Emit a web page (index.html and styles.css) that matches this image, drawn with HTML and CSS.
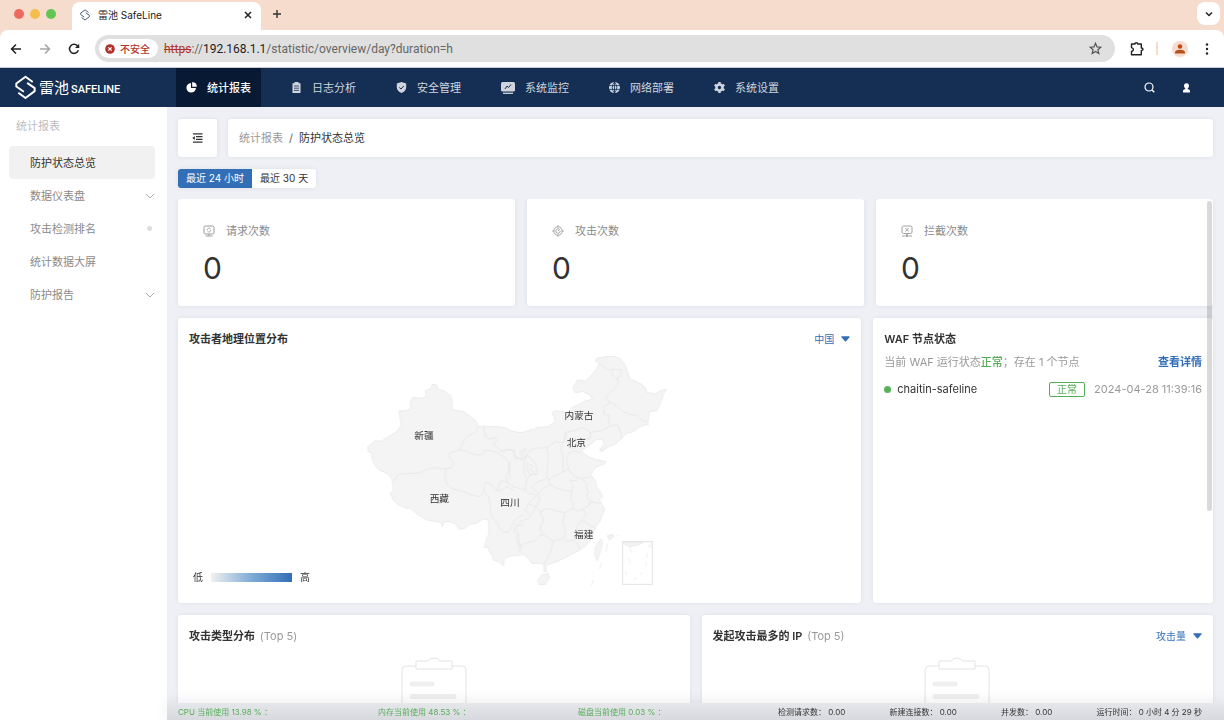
FILE: index.html
```html
<!DOCTYPE html>
<html lang="zh-CN">
<head>
<meta charset="utf-8">
<meta name="viewport" content="width=device-width, initial-scale=1">
<title>雷池 SafeLine</title>
<link rel="stylesheet" href="styles.css">
</head>
<body>
<svg class="defs" width="0" height="0" aria-hidden="true">
  <symbol id="logo" viewBox="44 224 64 74">
    <path d="M98 244 76 228 48 249V258L71 274M54 277 76 293 104 272V263L81 247" fill="none" stroke="currentColor" stroke-width="6" stroke-linejoin="round"/>
  </symbol>
  <symbol id="chevron" viewBox="0 0 10 10"><path d="M1 3 5 7 9 3" fill="none" stroke="currentColor" stroke-width="1"/></symbol>
  <symbol id="caret" viewBox="0 0 10 6"><path d="M1 0H9Q10 0 9.400 1L5.700 5.500Q5 6 4.300 5.500L.6 1Q0 0 1 0Z" fill="currentColor"/></symbol>
  <symbol id="clipboard" viewBox="0 0 66 60">
    <path d="M15 9H5Q1 9 1 13V60H65V13Q65 9 61 9H51" fill="#fff" stroke="#e4e4e4"/>
    <path d="M15 4H27Q29 1 33 1T39 4H51V12H15Z" fill="#fff" stroke="#e4e4e4"/>
    <path d="M11 27H31M11 39.500H53" stroke="#efefef" stroke-width="5" stroke-linecap="round"/>
  </symbol>
</svg>

<div class="browser">
  <div class="tabstrip">
    <div class="lights"><i class="red"></i><i class="amber"></i><i class="green"></i></div>
    <div class="tab">
      <svg class="tab-logo" width="10" height="12"><use href="#logo"/></svg>
      <span class="tab-title">雷池 SafeLine</span>
      <button class="plain" aria-label="关闭标签页"><svg width="8" height="8" viewBox="0 0 8 8"><path d="M1 1 7 7M7 1 1 7" stroke="#222" stroke-width="1.500"/></svg></button>
    </div>
    <button class="plain new-tab" aria-label="新标签页"><svg width="10" height="10" viewBox="0 0 10 10"><path d="M5 1V9M1 5H9" stroke="#333" stroke-width="1.400"/></svg></button>
    <button class="plain tab-search" aria-label="搜索标签页"><svg width="8" height="8" viewBox="0 0 8 8"><path d="M1 2.500 4 5.500 7 2.500" fill="none" stroke="#222" stroke-width="1.500"/></svg></button>
  </div>
  <div class="toolbar">
    <button class="plain" aria-label="后退"><svg width="12" height="12" viewBox="0 0 12 12"><path d="M6 1.500 1.500 6 6 10.500M1.500 6H11" fill="none" stroke="#222" stroke-width="1.500"/></svg></button>
    <button class="plain" aria-label="前进"><svg width="12" height="12" viewBox="0 0 12 12"><path d="M6 1.500 10.500 6 6 10.500M10.500 6H1" fill="none" stroke="#a5a5a5" stroke-width="1.500"/></svg></button>
    <button class="plain" aria-label="重新加载"><svg width="12" height="12" viewBox="0 0 12 12"><path d="M10.300 7.300A4.500 4.500 0 1 1 9.500 3L11 4.500" fill="none" stroke="#222" stroke-width="1.500"/><path d="M11.200.8V5H7Z" fill="#222"/></svg></button>
    <div class="omnibox">
      <button class="security">
        <svg width="10" height="10" viewBox="0 0 10 10"><circle cx="5" cy="5" r="4.800" fill="#b0322a"/><path d="M3.300 3.300 6.700 6.700M6.700 3.300 3.300 6.700" stroke="#fff" stroke-width="1.200"/></svg>不安全</button>
      <div class="url" role="textbox" aria-label="地址栏"><s>https</s>://<b>192.168.1.1</b>/statistic/overview/day?duration=h</div>
      <button class="plain" aria-label="收藏"><svg width="13" height="13" viewBox="0 0 13 13"><path d="M6.500 1.300 8 4.900 11.900 5.200 8.900 7.700 9.800 11.500 6.500 9.500 3.200 11.500 4.100 7.700 1.100 5.200 5 4.900Z" fill="none" stroke="#555" stroke-width="1.200"/></svg></button>
    </div>
    <button class="plain ext" aria-label="扩展程序"><svg width="14" height="14" viewBox="0 0 14 14"><path d="M1.500 2H5Q5 .8 6.300.8T7.600 2H11.300V6Q13 6 13 7.200T11.300 8.400V12.800H1.500V9.500Q3.400 9 3.400 7.500T1.500 5.600Z" fill="none" stroke="#222" stroke-width="1.400" stroke-linejoin="round"/></svg></button>
    <span class="divider"></span>
    <button class="plain avatar" aria-label="个人资料"><svg width="10" height="10" viewBox="0 0 10 10"><circle cx="5" cy="2.500" r="2.300" fill="#b8501e"/><path d="M0 9.500V8.200Q1 5.800 5 5.800T10 8.200V9.500Z" fill="#b8501e"/></svg></button>
    <button class="plain" aria-label="菜单"><svg width="4" height="12" viewBox="0 0 4 12"><g fill="#222"><circle cx="2" cy="1.500" r="1.200"/><circle cx="2" cy="6" r="1.200"/><circle cx="2" cy="10.500" r="1.200"/></g></svg></button>
  </div>
</div>

<header class="topbar">
  <a class="brand" href="#">
    <svg width="21" height="25"><use href="#logo"/></svg>
    <span class="brand-cn">雷池</span><span class="brand-en">SAFELINE</span>
  </a>
  <nav class="mainnav">
    <a class="active" href="#"><svg width="11" height="11" viewBox="0 0 11 11"><path d="M5 1V6H10A4.800 4.800 0 1 1 5 1Z" fill="currentColor"/><path d="M6.200 0A5 5 0 0 1 10.900 4.800H6.200Z" fill="currentColor"/></svg>统计报表</a>
    <a href="#"><svg width="11" height="11" viewBox="0 0 11 11"><path d="M1.500 1.300H3.500V0H7.500V1.300H9.500V11H1.500Z" fill="currentColor"/><path d="M3 4H8M3 6.200H8M3 8.400H8" stroke="#142e54" stroke-width=".8"/></svg>日志分析</a>
    <a href="#"><svg width="11" height="11" viewBox="0 0 11 11"><path d="M5.500 0 10.200 1.500V5Q10.200 9 5.500 11Q.8 9 .8 5V1.500Z" fill="currentColor"/><path d="M3.300 5.500 5 7 7.800 4" fill="none" stroke="#142e54"/></svg>安全管理</a>
    <a href="#"><svg width="14" height="12" viewBox="0 0 14 12"><rect width="14" height="9.500" rx="1.500" fill="currentColor"/><path d="M2 11.300H12" stroke="currentColor" stroke-width="1.300"/><path d="M4 7 6 4 7.500 5.500 10 2.500" fill="none" stroke="#142e54"/></svg>系统监控</a>
    <a href="#"><svg width="11" height="11" viewBox="0 0 11 11"><circle cx="5.500" cy="5.500" r="5.500" fill="currentColor"/><path d="M0 3.600H11M0 7.400H11M5.500 0V11M5.500 0Q1 5.500 5.500 11Q10 5.500 5.500 0" fill="none" stroke="#142e54" stroke-width=".8"/></svg>网络部署</a>
    <a href="#"><svg width="11" height="11" viewBox="0 0 11 11"><circle cx="5.500" cy="5.500" r="3" fill="none" stroke="currentColor" stroke-width="2.600"/><path d="M5.500 0V2.500M5.500 8.500V11M.7 2.700 3 4.200M8 6.800 10.300 8.300M.7 8.300 3 6.800M8 4.200 10.300 2.700" stroke="currentColor" stroke-width="2.400"/></svg>系统设置</a>
  </nav>
  <div class="tools">
    <button class="plain" aria-label="搜索"><svg width="11" height="11" viewBox="0 0 11 11"><circle cx="5" cy="5" r="4" fill="none" stroke="#fff" stroke-width="1.200"/><path d="M8 8 10.300 10.300" stroke="#fff" stroke-width="1.400"/></svg></button>
    <button class="plain" aria-label="用户"><svg width="9" height="10" viewBox="0 0 9 10"><circle cx="4.500" cy="2.800" r="2.500" fill="#fff"/><path d="M3.200 4H5.800V6L8 7.200V9.500H1V7.200L3.200 6Z" fill="#fff"/></svg></button>
  </div>
</header>

<div class="app">
  <aside class="sidebar">
    <h2>统计报表</h2>
    <nav>
      <a class="active" href="#">防护状态总览</a>
      <a href="#">数据仪表盘<svg width="10" height="10"><use href="#chevron"/></svg></a>
      <a href="#">攻击检测排名<i class="dot"></i></a>
      <a href="#">统计数据大屏</a>
      <a href="#">防护报告<svg width="10" height="10"><use href="#chevron"/></svg></a>
    </nav>
  </aside>

  <div class="page">
    <div class="crumbbar">
      <button class="fold" aria-label="收起菜单"><svg width="11" height="10" viewBox="0 0 11 10"><path d="M1 .8H10.500M4 3.600H10.500M4 6.400H10.500M1 9.200H10.500" stroke="#333" stroke-width="1.300"/><path d="M2.800 3V7L.3 5Z" fill="#333"/></svg></button>
      <nav class="crumbs" aria-label="面包屑"><a href="#">统计报表</a><span>/</span><b>防护状态总览</b></nav>
    </div>

    <div class="segmented">
      <button class="on" aria-pressed="true">最近 24 小时</button><button aria-pressed="false">最近 30 天</button>
    </div>

    <main class="scroller">
      <div class="row thirds">
        <section class="card stat">
          <h3><svg width="12" height="12" viewBox="0 0 12 12"><g fill="none" stroke="#999"><rect x="1" y="1" width="10" height="8" rx="1.500"/><path d="M6 9V11M2.500 11H9.500M4.200 5.200A1.900 1.900 0 0 1 7.500 3.800M7.800 4.900A1.900 1.900 0 0 1 4.500 6.300" stroke-width=".9"/></g></svg>请求次数</h3>
          <p>0</p>
        </section>
        <section class="card stat">
          <h3><svg width="12" height="12" viewBox="0 0 12 12"><g fill="none" stroke="#999" stroke-width=".9"><circle cx="6" cy="6" r="4.200"/><path d="M6 .3V2.200M6 9.800V11.700M.3 6H2.200M9.800 6H11.700M6 6 7.800 4.200M7.400 4.300A2.200 2.200 0 1 0 8.200 6"/></g></svg>攻击次数</h3>
          <p>0</p>
        </section>
        <section class="card stat">
          <h3><svg width="12" height="12" viewBox="0 0 12 12"><g fill="none" stroke="#999" stroke-width=".9"><rect x="1" y="1" width="10" height="7.500" rx="1.500"/><path d="M4.300 3 7.700 6.500M7.700 3 4.300 6.500M6 8.500V10M1 11H4.500M7.500 11H11"/></g><circle cx="6" cy="10.700" r="1.200" fill="#999"/></svg>拦截次数</h3>
          <p>0</p>
        </section>
      </div>

      <div class="row two-one">
        <section class="card">
          <div class="card-head">
            <h3>攻击者地理位置分布</h3>
            <label class="picker"><select aria-label="地图范围"><option>中国</option><option>世界</option></select><svg width="9" height="6"><use href="#caret"/></svg></label>
          </div>
          <div class="map-body">
            <svg class="map" viewBox="0 12 990 729" role="img" aria-label="中国地图">
              <defs><filter id="coast" x="-5%" y="-5%" width="110%" height="110%" color-interpolation-filters="sRGB"><feTurbulence type="fractalNoise" baseFrequency=".09" numOctaves="2" seed="4"/><feDisplacementMap in="SourceGraphic" scale="5" xChannelSelector="R" yChannelSelector="G"/></filter></defs>
              <g filter="url(#coast)">
                <path class="land" d="M510 262 490 262 470 258 450 248 430 245 385 243 370 244 360 225 345 212 325 200 290 193 292 165 285 150 268 138 248 132 245 120 232 118 228 130 212 137 213 156 200 160 172 157 165 175 167 192 150 197 132 198 136 225 138 240 128 258 100 275 80 288 60 288 38 305 40 320 52 325 50 340 58 358 72 375 85 380 100 388 112 405 112 415 115 435 106 445 115 465 130 480 150 488 165 490 190 510 215 525 245 530 258 532 262 545 268 530 285 530 305 540 312 553 330 550 345 538 365 535 385 522 400 525 402 560 392 590 388 607 400 608 405 625 412 630 415 645 430 650 445 663 448 640 470 632 510 628Z"/>
                <path class="line" d="M510 262 490 262 470 258 450 248 430 245 385 243 370 244 360 225 345 212 325 200 290 193 292 165 285 150 268 138 248 132 245 120 232 118 228 130 212 137 213 156 200 160 172 157 165 175 167 192 150 197 132 198 136 225 138 240 128 258 100 275 80 288 60 288 38 305 40 320 52 325 50 340 58 358 72 375 85 380 100 388 112 405 112 415 115 435 106 445 115 465 130 480 150 488 165 490 190 510 215 525 245 530 258 532 262 545 268 530 285 530 305 540 312 553 330 550 345 538 365 535 385 522 400 525 402 560 392 590 388 607 400 608 405 625 412 630 415 645 430 650 445 663 448 640 470 632 495 632 510 628"/>
                <path class="line" d="M118 408 130 388 165 385 190 385 215 373 240 368 265 372 290 368 295 350 283 340 282 325 312 315 320 298 335 275 365 260 370 244M385 243 390 270 400 282 422 278 425 290 415 298 430 310 445 322 462 313 478 316 480 335 500 343 510 345M312 315 335 318 355 328 380 330 390 315 415 318 430 325 450 338 462 355 465 375 452 395 455 410 435 408 432 422 425 437 410 420 392 412 387 425 388 440 372 455 350 450 325 440 295 432 278 422 270 400 272 372M388 440 400 455 407 485 405 505 412 520 425 530 435 550 445 562 460 562 470 545 480 525 500 510 510 512M425 437 440 435 455 425 475 435M483 542 510 540M478 545 478 562 492 570 490 600 510 608"/>
                <g transform="translate(435 0)">
                  <path class="land" d="M70 262 110 248 145 245 165 230 162 215 155 205 165 197 185 200 205 202 220 185 235 180 250 170 278 162 270 150 250 140 225 143 218 130 232 105 255 108 275 90 290 70 298 55 285 48 290 40 320 34 345 35 362 42 375 60 385 85 390 103 405 108 425 118 437 130 440 142 465 147 480 138 498 133 490 150 485 165 475 188 470 197 448 200 445 220 443 238 420 245 400 260 380 265 365 280 345 298 325 305 305 320 298 315 312 298 308 283 290 283 275 295 262 305 245 315 250 325 270 338 280 340 290 345 300 345 318 350 312 358 290 365 280 375 272 390 285 405 290 425 300 440 308 455 298 462 305 478 315 490 308 510 295 535 285 550 275 580 260 600 240 615 220 625 195 638 170 650 145 658 138 665 140 680 132 680 132 658 115 655 95 655 85 640 70 628Z"/>
                  <path class="line" d="M70 262 110 248 145 245 165 230 162 215 155 205 165 197 185 200 205 202 220 185 235 180 250 170 278 162 270 150 250 140 225 143 218 130 232 105 255 108 275 90 290 70 298 55 285 48 290 40 320 34 345 35 362 42 375 60 385 85 390 103 405 108 425 118 437 130 440 142 465 147 480 138 498 133 490 150 485 165 475 188 470 197 448 200 445 220 443 238 420 245 400 260 380 265 365 280 345 298 325 305 305 320 298 315 312 298 308 283 290 283 275 295 262 305 245 315 250 325 270 338 280 340 290 345 300 345 318 350 312 358 290 365 280 375 272 390 285 405 290 425 300 440 308 455 298 462 305 478 315 490 308 510 295 535 285 550 275 580 260 600 240 615 220 625 195 638 170 650 145 658 138 665 140 680 132 680 132 658 115 655 95 655 85 640 70 628"/>
                  <path class="line" d="M298 55 325 75 345 72 365 75 362 92 352 100 355 118 345 130 325 148 318 158 330 172 312 185 310 208 328 212 325 228 332 243 300 258 272 262 270 282 250 280 245 292M340 72 335 88 345 98 355 102M330 172 350 182 370 200 390 208 410 212 425 225 440 230M332 243 352 238 362 262 365 280M193 285 195 262 222 258 242 248 260 252 270 265M75 342 85 320 105 310 140 308 165 292 190 292 200 265M205 285 225 280 235 295 225 310 205 308ZM140 308 145 335 142 365 140 392 145 405 155 398 188 382 190 355 188 330 182 310 190 292M188 382 205 372 200 350 205 325 225 318 245 325M205 372 218 390 235 398 250 400 272 395M145 405 150 418 170 430 190 435 215 440M215 440 218 420 210 405 228 408 235 398M215 440 212 465 222 475 218 490 235 498 248 492 262 485 272 472 260 455 265 440 258 425 262 415 245 402M262 485 275 470 298 475M115 445 130 430 150 418M115 445 118 465 108 485 120 500 145 490 175 500 195 502 218 490M195 502 188 530 195 555 192 578 200 590 220 585 232 570 230 545 245 525 258 510 250 492M245 525 275 545 285 550M120 500 130 525 120 550 130 570 145 578 158 588 175 585 192 578M220 585 235 600 240 615M158 588 155 612 145 635 132 658M60 600 85 592 105 588 120 570 130 570M50 545 60 530 85 520 100 500 108 485 85 478 75 495 90 510M50 545 55 565 48 580 60 600 60 625M115 445 95 425 110 412 140 400M75 435 85 445 110 450 100 462 85 478M75 435 80 405 90 390 112 388 110 365 98 345 82 330 75 342M75 342 68 325 78 310 60 320M82 355 95 360 92 375 105 385 90 390 82 375ZM0 318 20 312 40 318 45 340 65 342 60 320M75 342 70 375 78 400M30 350 25 375 32 395 20 410 40 425 62 432 75 435"/>
                  <path class="land-line" d="M125 690 145 685 148 700 135 718 120 720 112 708ZM302 582 308 592 302 615 292 648 284 630 285 608ZM322 572 338 568 342 575 328 584Z"/>
                  <path class="line" d="M322 595 318 620M305 655 298 672M280 705 274 722M352 572H357"/>
                  <path class="land-line" d="M370 592H430Q410 606 385 604L370 596Z"/>
                  <path class="line" d="M390 605 392 622M385 640 392 655M376 678 380 690M400 704 410 700M420 690 426 682M436 665 440 650M440 638 442 625M445 600 450 608 456 590"/>
                </g>
              </g>
              <rect class="inset" x="803" y="590" width="89" height="128"/>
              <g class="names"><text x="207" y="281">新疆</text><text x="253" y="472">西藏</text><text x="465" y="483">四川</text><text x="672" y="223">内蒙古</text><text x="664" y="304">北京</text><text x="686" y="580">福建</text></g>
            </svg>
            <div class="legend"><span>低</span><i></i><span>高</span></div>
          </div>
        </section>

        <section class="card">
          <div class="card-head"><h3>WAF 节点状态</h3></div>
          <div class="waf-note"><span>当前 WAF 运行状态<em>正常</em>；存在 1 个节点</span><a href="#">查看详情</a></div>
          <div class="node"><i></i><span class="node-name">chaitin-safeline</span><span class="badge">正常</span><time>2024-04-28 11:39:16</time></div>
        </section>
      </div>

      <div class="row halves">
        <section class="card">
          <div class="card-head"><h3>攻击类型分布 <small>(Top 5)</small></h3></div>
          <div class="empty"><svg width="66" height="60"><use href="#clipboard"/></svg></div>
        </section>
        <section class="card">
          <div class="card-head"><h3>发起攻击最多的 IP <small>(Top 5)</small></h3>
            <label class="picker"><select aria-label="排序指标"><option>攻击量</option><option>拦截量</option></select><svg width="9" height="6"><use href="#caret"/></svg></label></div>
          <div class="empty"><svg width="66" height="60"><use href="#clipboard"/></svg></div>
        </section>
      </div>
      <div class="thumb"></div>
    </main>

    <footer class="statusbar">
      <span class="ok">CPU 当前使用 13.98 % ：</span>
      <span class="ok">内存当前使用 48.53 % ：</span>
      <span class="ok">磁盘当前使用 0.03 % ：</span>
      <div class="counters"><span>检测请求数： 0.00</span><span>新建连接数： 0.00</span><span>并发数： 0.00</span><span>运行时间： 0 小时 4 分 29 秒</span></div>
    </footer>
  </div>
</div>
</body>
</html>
```
FILE: styles.css
```css
* { box-sizing: border-box; }
body {
  margin: 0;
  height: 100vh;
  display: flex;
  flex-direction: column;
  overflow: hidden;
  background: #eef0f5;
  color: #333;
  font: 11px/20px Inter, "Noto Sans CJK SC", sans-serif;
}
h2, h3, p { margin: 0; font-size: 11px; }
a { color: inherit; text-decoration: none; }
button, select { font: inherit; color: inherit; border: 0; margin: 0; padding: 0; background: none; }
svg { display: block; flex: none; }
.defs { position: absolute; }
.plain { display: flex; align-items: center; justify-content: center; flex: none; }

/* browser frame */
.browser { flex: none; background: #f6dccc; border-bottom: 1px solid #c9cbd0; }
.tabstrip { display: flex; height: 30px; align-items: center; padding: 0 4px 0 14px; }
.lights { display: flex; gap: 6px; width: 58px; padding-bottom: 2px; }
.lights i { width: 10px; height: 10px; border-radius: 50%; }
.red { background: #ed6a5e; }
.amber { background: #f4be4f; }
.green { background: #61c554; }
.tab {
  display: flex; align-items: center; align-self: flex-end; gap: 8px;
  width: 189px; height: 28px; padding: 0 9px 3px 8px;
  background: #fff; border-radius: 8px 8px 0 0; font-size: 10px;
}
.tab-logo { color: #3b5378; }
.tab-title { flex: 1; color: #222; }
.new-tab { margin-left: 11px; padding-bottom: 2px; }
.tab-search { width: 23px; height: 23px; margin: 0 0 3px auto; border-radius: 8px; background: #fff; }
.toolbar {
  display: flex; align-items: center; gap: 17px; height: 37px; padding: 0 15px 0 10px;
  background: #fff; border-radius: 8px 8px 0 0;
}
.omnibox {
  display: flex; align-items: center; flex: 1; height: 27px; margin-left: -2px;
  padding: 0 13px 0 4px; background: #e0e0e0; border-radius: 14px;
}
.security {
  display: flex; align-items: center; gap: 5px; height: 19px; padding: 0 8px 0 6px;
  border-radius: 10px; background: #fff; color: #b0322a; font-size: 10px; font-weight: 500;
}
.url { flex: 1; margin-left: 6px; color: #666; font: 12px/20px Roboto, sans-serif; }
.url s { color: #b0322a; }
.url b { color: #222; font-weight: 400; }
.ext { margin: 0 -1px 0 -2px; }
.divider { width: 2px; height: 13px; background: #f6dccc; margin: 0 -3px 0 -4px; }
.avatar { width: 16px; height: 16px; border-radius: 50%; background: #f6dccc; }

/* product header */
.topbar { display: flex; flex: none; height: 39px; background: #142e54; color: #d0d5dd; }
.brand { display: flex; align-items: center; width: 176px; padding-left: 15px; color: #fff; }
.brand-cn { margin-left: 3px; font-size: 15px; }
.brand-en { align-self: flex-end; margin: 0 0 7px 2px; font: 500 11px/20px Roboto, sans-serif; }
.mainnav { display: flex; gap: 20px; }
.mainnav a { display: flex; align-items: center; gap: 10px; padding: 0 10px; }
.mainnav .active { background: #081a33; color: #fff; font-weight: 500; }
.tools { display: flex; gap: 27px; margin-left: auto; padding-right: 33px; }

.app { display: flex; flex: 1; min-height: 0; }
.sidebar { flex: none; width: 167px; padding: 9px 12px 0 9px; background: #fff; color: #8a8a8a; }
.sidebar h2 { margin: 0 0 10px 7px; font-weight: 400; color: #bcbcbc; }
.sidebar a { display: flex; align-items: center; justify-content: space-between; height: 33px; padding-left: 21px; border-radius: 4px; }
.sidebar .active { background: #f1f1f1; color: #333; }
.sidebar svg { color: #aaa; }
.dot { width: 5px; height: 5px; margin-right: 3px; border-radius: 50%; background: #ddd; }

.page { display: flex; flex: 1; flex-direction: column; min-width: 0; padding: 12px 0 0 11px; }
.crumbbar { display: flex; gap: 11px; margin-right: 11px; }
.fold, .crumbs, .card, .segmented { background: #fff; border-radius: 3px; box-shadow: 0 0 4px rgba(20, 40, 90, .08); }
.fold { display: flex; align-items: center; justify-content: center; width: 39px; height: 38px; }
.crumbs { display: flex; align-items: center; flex: 1; gap: 6px; padding: 0 11px; color: #999; }
.crumbs b { font-weight: 400; color: #333; }
.crumbs span { color: #666; }
.segmented { display: flex; align-self: flex-start; margin: 12px 0 11px; overflow: hidden; font-size: 10px; line-height: 19px; }
.segmented button { padding: 0 8px; }
.segmented .on { background: #326fb7; color: #fff; }

.scroller { position: relative; flex: 1; min-height: 0; overflow: hidden; padding-right: 11px; margin-left: -4px; padding-left: 4px; }
.row { display: grid; gap: 12px; margin-bottom: 12px; }
.thirds { grid-template-columns: 1fr 1fr 1fr; }
.two-one { grid-template-columns: 171fr 85fr; }
.halves { grid-template-columns: 1fr 1fr; }
.card { padding: 11px; min-width: 0; }
.stat { padding: 22px 25px 18px; }
.stat h3 { display: flex; align-items: center; gap: 11px; font-weight: 400; color: #8a8a8a; }
.stat p { margin-top: 7px; font-size: 30px; line-height: 40px; }
.card-head { display: flex; align-items: center; justify-content: space-between; height: 20px; }
.card-head h3 { font-weight: 600; }
.card-head small { margin-left: 2px; font-size: 11px; font-weight: 400; color: #999; }
.picker { display: flex; align-items: center; gap: 7px; color: #326fb7; font-size: 10px; }
.picker select { appearance: none; }
.map-body { display: grid; justify-items: center; }
.map-body > * { grid-area: 1 / 1; }
.map { width: 100%; max-width: 330px; }
.land, .land-line { fill: #f4f4f4; }
.line, .land-line { stroke: #e4e4e4; stroke-width: 2px; stroke-linejoin: round; }
.line { fill: none; }
.inset { fill: none; stroke: #e3e3e3; stroke-width: 3px; }
.names { font-size: 29px; fill: #333; text-anchor: middle; }
.legend { display: flex; align-items: center; align-self: end; justify-self: start; gap: 8px; padding: 0 0 5px 4px; font-size: 10px; }
.legend i { width: 81px; height: 9px; background: linear-gradient(90deg, #f1f1f1, #7fabd5 50%, #326fb7); }

.waf-note { display: flex; justify-content: space-between; margin-top: 3px; color: #999; }
.waf-note em { color: #56ad58; font-style: normal; font-weight: 500; }
.waf-note a { color: #326fb7; font-weight: 600; }
.node { display: flex; align-items: center; margin-top: 7px; }
.node i { width: 7px; height: 7px; margin-right: 6px; border-radius: 50%; background: #56b35a; }
.node-name { flex: 1; }
.badge { margin-right: 9px; padding: 0 7px; border: 1px solid #56ad58; border-radius: 2px; color: #56ad58; line-height: 13px; font-size: 10px; }
.node time { color: #999; }
.empty { display: flex; justify-content: center; padding-top: 11px; }
.thumb { position: absolute; top: 2px; right: 12px; width: 5px; height: 310px; border-radius: 3px; background: rgba(0, 0, 0, .15); }

.statusbar {
  position: relative; display: grid; grid-template-columns: 200fr 200fr 200fr 424fr;
  margin-left: -11px; padding: 2px 22px 0 11px; font-size: 8px; line-height: 15px; white-space: nowrap;
  background: linear-gradient(#e6e7eb, #d8d9de); box-shadow: 0 -2px 14px rgba(0, 0, 0, .07);
}
.ok { color: #56ad58; }
.counters { display: flex; justify-content: space-between; }
```
